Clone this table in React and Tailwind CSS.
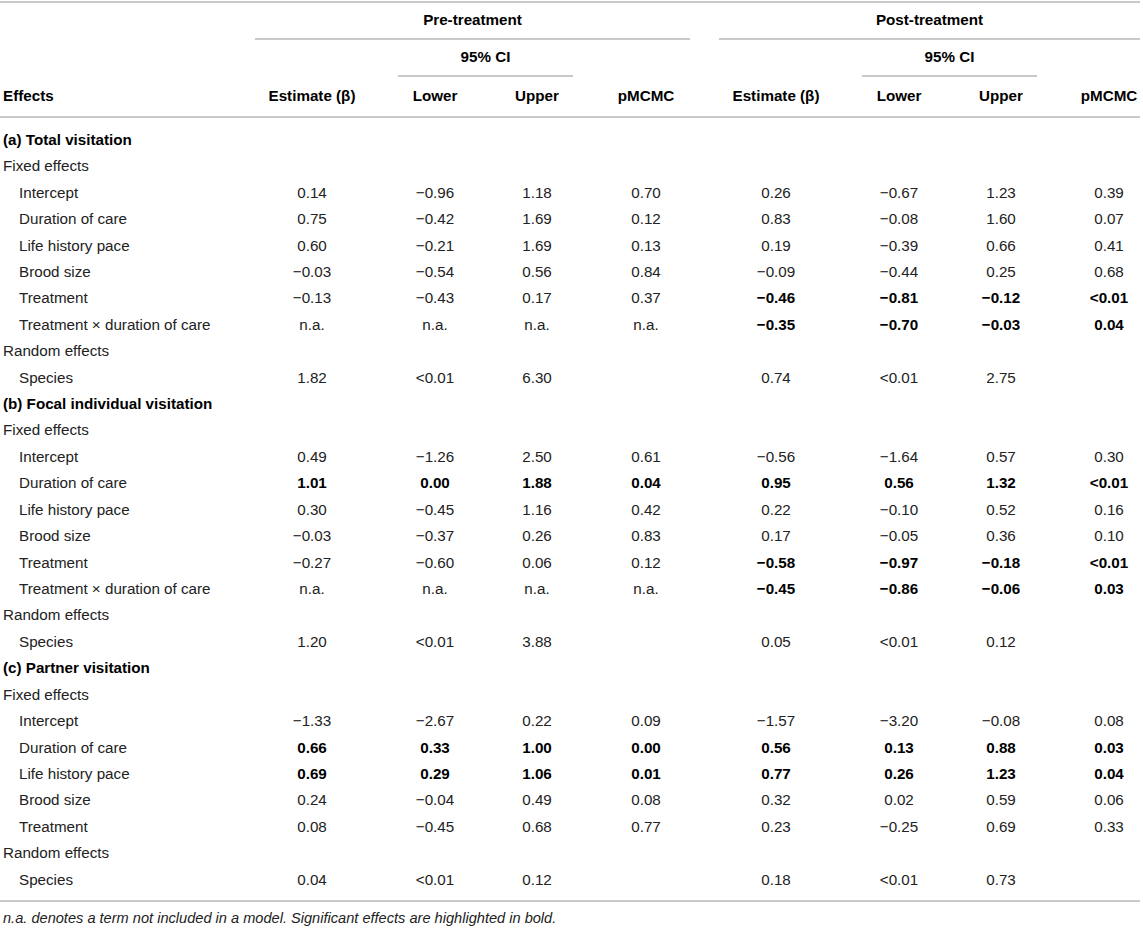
import React from 'react';

const M = '\u2212';

// each fixed row: [label, pre values, post values, pre bold, post bold]
const sections = [
  {
    title: '(a) Total visitation',
    fixed: [
      ['Intercept', ['0.14', M + '0.96', '1.18', '0.70'], ['0.26', M + '0.67', '1.23', '0.39']],
      ['Duration of care', ['0.75', M + '0.42', '1.69', '0.12'], ['0.83', M + '0.08', '1.60', '0.07']],
      ['Life history pace', ['0.60', M + '0.21', '1.69', '0.13'], ['0.19', M + '0.39', '0.66', '0.41']],
      ['Brood size', [M + '0.03', M + '0.54', '0.56', '0.84'], [M + '0.09', M + '0.44', '0.25', '0.68']],
      ['Treatment', [M + '0.13', M + '0.43', '0.17', '0.37'], [M + '0.46', M + '0.81', M + '0.12', '<0.01'], false, true],
      ['Treatment \u00d7 duration of care', ['n.a.', 'n.a.', 'n.a.', 'n.a.'], [M + '0.35', M + '0.70', M + '0.03', '0.04'], false, true],
    ],
    species: [['1.82', '<0.01', '6.30', ''], ['0.74', '<0.01', '2.75', '']],
  },
  {
    title: '(b) Focal individual visitation',
    fixed: [
      ['Intercept', ['0.49', M + '1.26', '2.50', '0.61'], [M + '0.56', M + '1.64', '0.57', '0.30']],
      ['Duration of care', ['1.01', '0.00', '1.88', '0.04'], ['0.95', '0.56', '1.32', '<0.01'], true, true],
      ['Life history pace', ['0.30', M + '0.45', '1.16', '0.42'], ['0.22', M + '0.10', '0.52', '0.16']],
      ['Brood size', [M + '0.03', M + '0.37', '0.26', '0.83'], ['0.17', M + '0.05', '0.36', '0.10']],
      ['Treatment', [M + '0.27', M + '0.60', '0.06', '0.12'], [M + '0.58', M + '0.97', M + '0.18', '<0.01'], false, true],
      ['Treatment \u00d7 duration of care', ['n.a.', 'n.a.', 'n.a.', 'n.a.'], [M + '0.45', M + '0.86', M + '0.06', '0.03'], false, true],
    ],
    species: [['1.20', '<0.01', '3.88', ''], ['0.05', '<0.01', '0.12', '']],
  },
  {
    title: '(c) Partner visitation',
    fixed: [
      ['Intercept', [M + '1.33', M + '2.67', '0.22', '0.09'], [M + '1.57', M + '3.20', M + '0.08', '0.08']],
      ['Duration of care', ['0.66', '0.33', '1.00', '0.00'], ['0.56', '0.13', '0.88', '0.03'], true, true],
      ['Life history pace', ['0.69', '0.29', '1.06', '0.01'], ['0.77', '0.26', '1.23', '0.04'], true, true],
      ['Brood size', ['0.24', M + '0.04', '0.49', '0.08'], ['0.32', '0.02', '0.59', '0.06']],
      ['Treatment', ['0.08', M + '0.45', '0.68', '0.77'], ['0.23', M + '0.25', '0.69', '0.33']],
    ],
    species: [['0.04', '<0.01', '0.12', ''], ['0.18', '<0.01', '0.73', '']],
  },
];

const grid = 'grid grid-cols-[255px_114px_132px_72px_146px_114px_132px_72px_103px]';
const Line = ({ className = '' }) => <div className={`h-[2px] bg-[#c9c9c9] ${className}`} />;

function Row({ label, indent, bold, pre, post, preBold, postBold }) {
  const empty = [0, 1, 2, 3].map((i) => <div key={i} />);
  return (
    <div className={`${grid} h-[26.43px]`}>
      <div className={`flex items-center ${indent ? 'pl-[19px]' : 'pl-[3px]'} ${bold ? 'font-bold text-black' : ''}`}>
        {label}
      </div>
      {pre
        ? pre.map((v, i) => (
            <div key={i} className={`flex items-center justify-center ${preBold ? 'font-bold text-black' : ''}`}>
              {v}
            </div>
          ))
        : empty}
      {post
        ? post.map((v, i) => (
            <div
              key={i}
              className={`flex items-center justify-center ${i === 3 ? 'pl-[41px]' : ''} ${postBold ? 'font-bold text-black' : ''}`}
            >
              {v}
            </div>
          ))
        : empty}
    </div>
  );
}

export default function App() {
  return (
    <div className="w-[1143px] bg-white pt-[1px] font-['Liberation_Sans',Arial,sans-serif] text-[15.2px] text-[#222]">
      <div className="w-[1140px]">
        <Line />
        <div className={`${grid} h-[35px] font-bold text-black`}>
          <div />
          <div className="col-span-4 mr-[29px] flex items-center justify-center">Pre-treatment</div>
          <div className="col-span-4 flex items-center justify-center">Post-treatment</div>
        </div>
        <div className={grid}>
          <div />
          <Line className="col-span-4 mr-[29px]" />
          <Line className="col-span-4" />
        </div>
        <div className={`${grid} h-[35px] font-bold text-black`}>
          <div />
          <div />
          <div className="col-span-2 ml-[29px] flex items-center justify-center">95% CI</div>
          <div />
          <div />
          <div className="col-span-2 ml-[29px] flex items-center justify-center">95% CI</div>
          <div />
        </div>
        <div className={grid}>
          <div />
          <div />
          <Line className="col-span-2 ml-[29px]" />
          <div />
          <div />
          <Line className="col-span-2 ml-[29px]" />
          <div />
        </div>
        <div className={`${grid} h-[39px] font-bold text-black`}>
          <div className="flex items-center pl-[3px]">Effects</div>
          <div className="flex items-center justify-center">Estimate (β)</div>
          <div className="flex items-center justify-center">Lower</div>
          <div className="flex items-center justify-center">Upper</div>
          <div className="flex items-center justify-center">pMCMC</div>
          <div className="flex items-center justify-center">Estimate (β)</div>
          <div className="flex items-center justify-center">Lower</div>
          <div className="flex items-center justify-center">Upper</div>
          <div className="flex items-center justify-center pl-[41px]">pMCMC</div>
        </div>
        <Line />
        <div className="pt-[9px] pb-[7px]">
          {sections.map((s) => (
            <React.Fragment key={s.title}>
              <Row label={s.title} bold />
              <Row label="Fixed effects" />
              {s.fixed.map(([label, pre, post, pb, qb]) => (
                <Row key={label} label={label} indent pre={pre} post={post} preBold={pb} postBold={qb} />
              ))}
              <Row label="Random effects" />
              <Row label="Species" indent pre={s.species[0]} post={s.species[1]} />
            </React.Fragment>
          ))}
        </div>
        <Line />
        <div className="pl-[3px] pt-[6px] text-[14.6px] italic text-[#222]">
          n.a. denotes a term not included in a model. Significant effects are highlighted in bold.
        </div>
      </div>
    </div>
  );
}
